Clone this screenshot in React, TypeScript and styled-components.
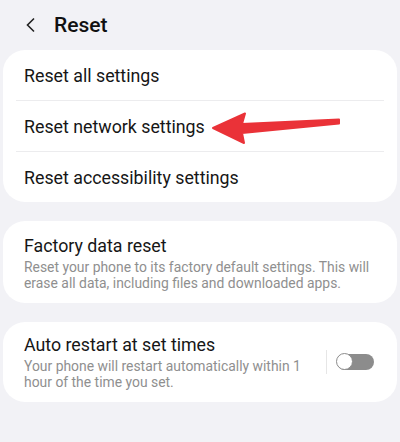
import styled, { createGlobalStyle } from "styled-components";

const Global = createGlobalStyle`
  html, body {
    margin: 0;
    padding: 0;
    background: #f2f2f6;
  }
  body {
    font-family: Roboto, "Noto Sans", sans-serif;
    color: #111;
  }
`;

const Screen = styled.div`
  width: 400px;
  height: 442px;
  overflow: hidden;
  background: #f2f2f6;
  padding: 0 3px;
  box-sizing: border-box;
  display: flex;
  flex-direction: column;
  gap: 19px;
`;

const Header = styled.div`
  height: 50px;
  display: flex;
  align-items: center;
  padding-left: 22px;
  gap: 17px;
  margin-bottom: -19px;

  svg {
    display: block;
  }
`;

const Title = styled.h1`
  margin: 0;
  font-size: 21px;
  font-weight: 500;
  color: #111;
`;

const Card = styled.div`
  background: #ffffff;
  border-radius: 22px;
  display: flex;
  flex-direction: column;
`;

const Row = styled.div`
  position: relative;
  height: 50px;
  display: flex;
  align-items: center;
  padding: 0 21px;
  font-size: 17.8px;
  color: #161616;

  & + & {
    border-top: 1px solid #ececee;
    margin: 0 13px;
    padding: 0 8px;
  }
`;

const Item = styled.div<{ $top: number; $bottom: number }>`
  display: flex;
  align-items: center;
  padding: ${(p) => p.$top}px 23px ${(p) => p.$bottom}px 21px;
  gap: 10px;
`;

const Texts = styled.div`
  flex: 1;
  display: flex;
  flex-direction: column;
`;

const ItemTitle = styled.div`
  font-size: 17.8px;
  line-height: 22px;
  color: #161616;
`;

const Sub = styled.div`
  font-size: 13.9px;
  line-height: 16px;
  color: #8f8f8f;
  margin-top: 2px;
`;

const Split = styled.div`
  width: 1px;
  height: 24px;
  background: #e6e6e6;
`;

const Track = styled.div`
  position: relative;
  width: 37px;
  height: 16px;
  border-radius: 9px;
  background: #8c8c8c;
`;

const Knob = styled.div`
  position: absolute;
  left: -1px;
  top: -1px;
  width: 15px;
  height: 15px;
  border-radius: 50%;
  background: #fff;
  border: 1.5px solid #8c8c8c;
`;

const Arrow = styled.svg`
  position: absolute;
  left: 195px;
  top: 10px;
`;

export default function App() {
  return (
    <>
      <Global />
      <Screen>
        <Header>
          <svg width="12" height="16" viewBox="0 0 12 16">
            <path d="M9 1.5 L2.5 8 L9 14.5" fill="none" stroke="#222" strokeWidth="1.6" />
          </svg>
          <Title>Reset</Title>
        </Header>
        <Card>
          <Row>Reset all settings</Row>
          <Row>
            Reset network settings
            <Arrow width="132" height="34" viewBox="0 0 132 34">
              <path
                d="M2 17 L34 2.5 L31 13 L128 8.5 L128 12.5 L31 22 L33 32 Z"
                fill="#ea3238"
                stroke="#ea3238"
                strokeWidth="2"
                strokeLinejoin="round"
              />
            </Arrow>
          </Row>
          <Row>Reset accessibility settings</Row>
        </Card>
        <Card>
          <Item $top={14} $bottom={12}>
            <Texts>
              <ItemTitle>Factory data reset</ItemTitle>
              <Sub>
                Reset your phone to its factory default settings. This will
                erase all data, including files and downloaded apps.
              </Sub>
            </Texts>
          </Item>
        </Card>
        <Card>
          <Item $top={12} $bottom={12}>
            <Texts>
              <ItemTitle>Auto restart at set times</ItemTitle>
              <Sub>
                Your phone will restart automatically within 1
                <br />
                hour of the time you set.
              </Sub>
            </Texts>
            <Split />
            <Track>
              <Knob />
            </Track>
          </Item>
        </Card>
      </Screen>
    </>
  );
}
